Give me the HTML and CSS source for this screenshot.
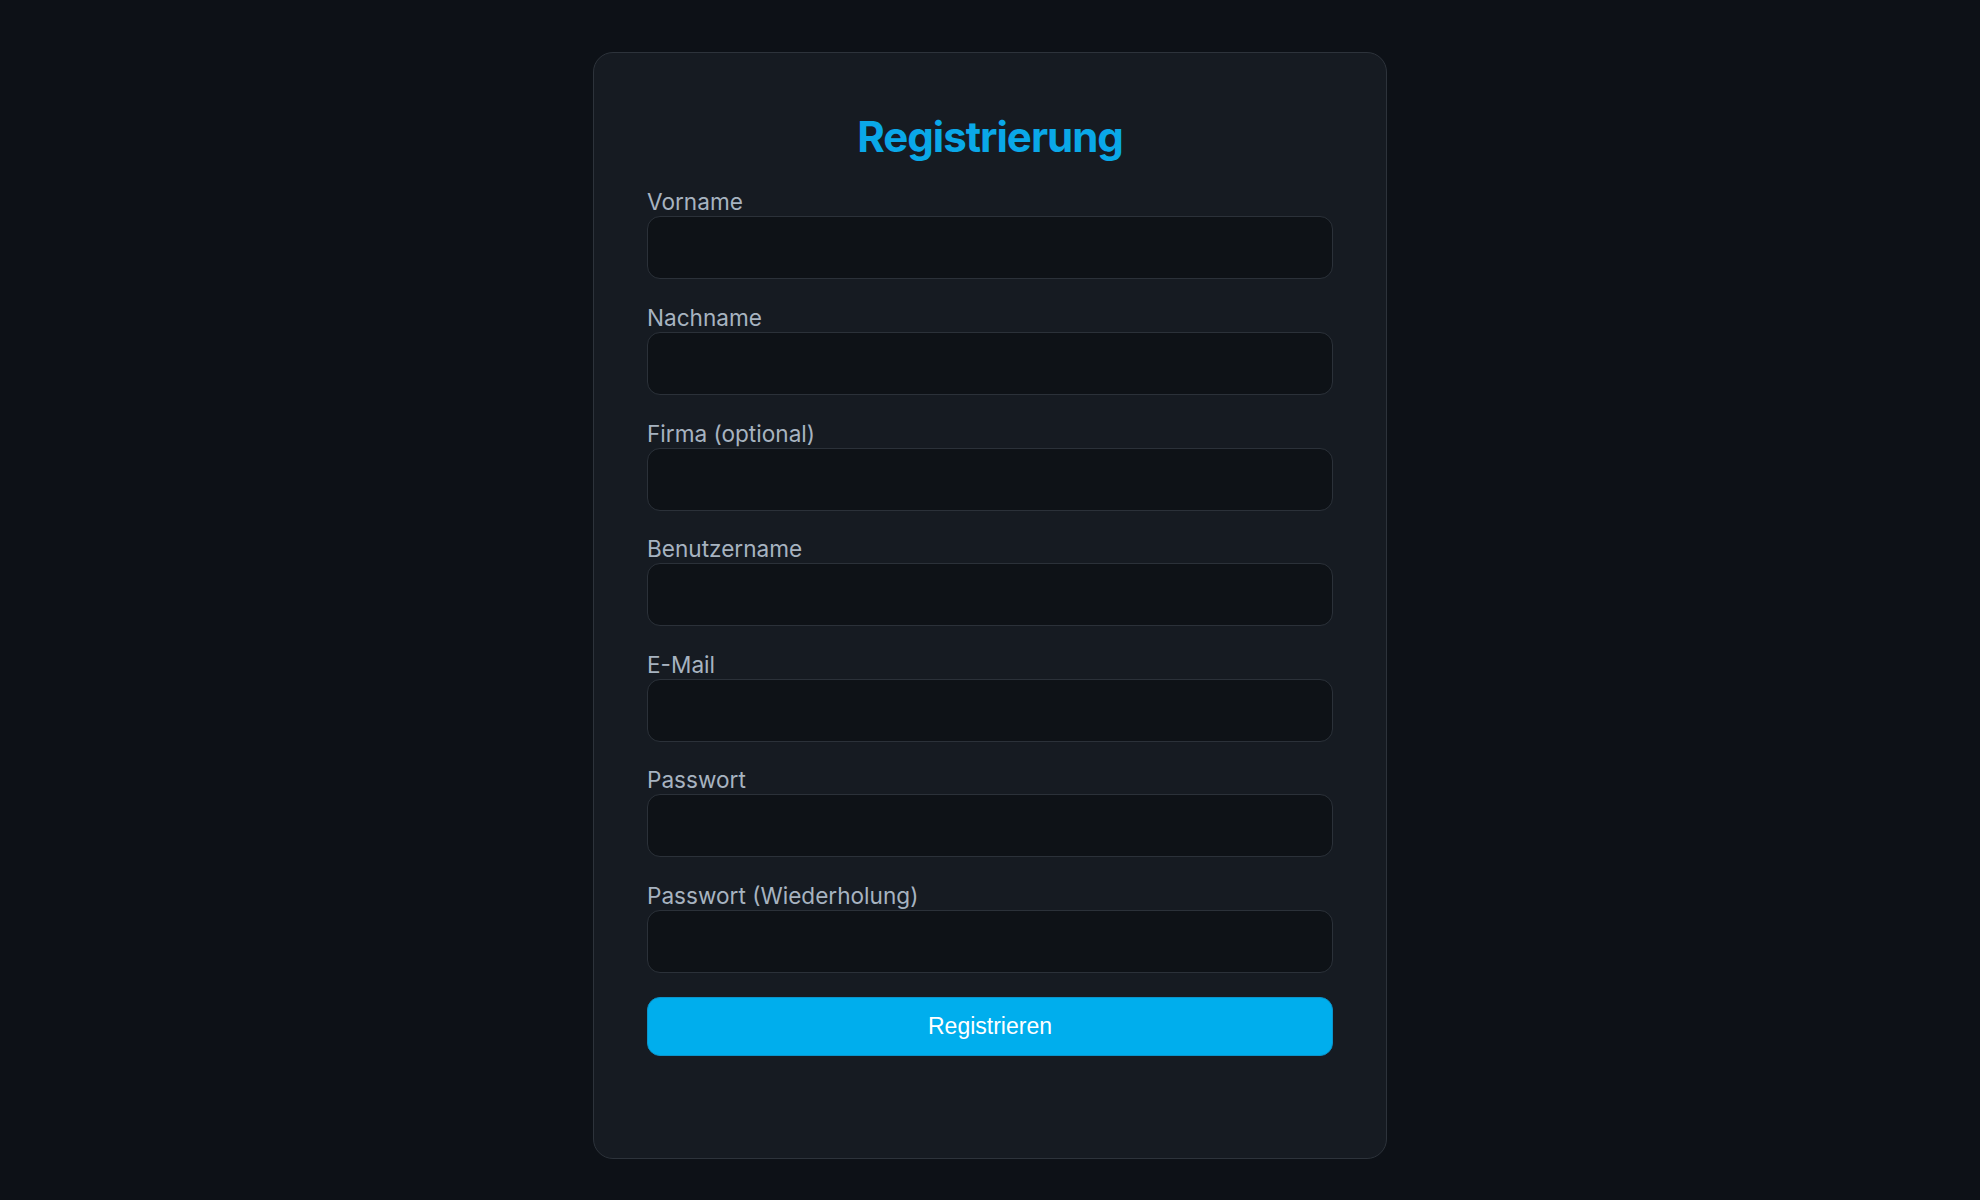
FILE: index.html
```html
<!DOCTYPE html>
<html lang="de">
<head>
	<meta charset="utf-8">
	<title>Registrierung</title>
	<link rel="stylesheet" href="styles.css">
</head>
<body>
	<div class="card">
		<h1 class="title">Registrierung</h1>
		<form class="form" onsubmit="return false">
			<div class="field">
				<label for="vorname">Vorname</label>
				<input type="text" class="input" id="vorname">
			</div>
			<div class="field">
				<label for="nachname">Nachname</label>
				<input type="text" class="input" id="nachname">
			</div>
			<div class="field">
				<label for="firma">Firma (optional)</label>
				<input type="text" class="input" id="firma">
			</div>
			<div class="field">
				<label for="user">Benutzername</label>
				<input type="text" class="input" id="user">
			</div>
			<div class="field">
				<label for="mail">E-Mail</label>
				<input type="email" class="input" id="mail">
			</div>
			<div class="field">
				<label for="pw">Passwort</label>
				<input type="password" class="input" id="pw">
			</div>
			<div class="field">
				<label for="pw2">Passwort (Wiederholung)</label>
				<input type="password" class="input" id="pw2">
			</div>
			<button type="submit" class="btn">Registrieren</button>
		</form>
	</div>
</body>
</html>
```

FILE: styles.css
```css
html, body{
	margin: 0;
	background-color: #0d1117;
}
body{
	padding-top: 52px;
	font-family: Inter, "Noto Sans", sans-serif;
}
.card{
	box-sizing: border-box;
	width: 794px;
	margin: 0 auto;
	padding: 59px 53px 102px;
	background-color: #161b22;
	border: 1px solid #2d333b;
	border-radius: 20px;
}
.title{
	margin: 0 0 27px;
	font-size: 42px;
	line-height: 1.2;
	font-weight: 700;
	color: #0aa8e8;
	text-align: center;
	letter-spacing: -1px;
}
.field{
	margin-bottom: 25.6px;
}
.field label{
	display: block;
	font-size: 22.6px;
	line-height: 26px;
	margin-bottom: 1px;
	color: #a7b3c0;
}
.field .input{
	display: block;
	box-sizing: border-box;
	width: 100%;
	height: 63px;
	margin: 0;
	padding: 0 16px;
	background-color: #0e1217;
	border: 1px solid #2b3139;
	border-radius: 13px;
	color: #c9d1d9;
	font-size: 20px;
	outline: none;
}
.btn{
	display: block;
	width: 100%;
	height: 59px;
	margin-top: -2px;
	background-color: #00aeed;
	border: 1px solid #0a95cc;
	border-radius: 13px;
	color: #fff;
	font-family: "Liberation Sans", Arial, sans-serif;
	font-size: 23px;
}
```
